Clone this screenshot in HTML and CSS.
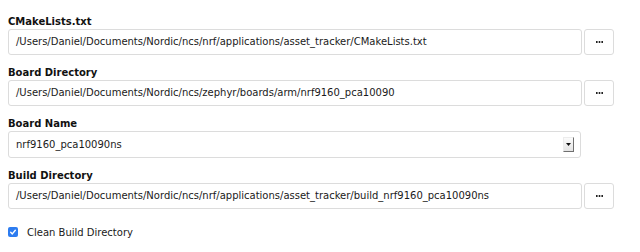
FILE: index.html
```html
<!DOCTYPE html>
<html>
<head>
<meta charset="utf-8">
<link rel="stylesheet" href="styles.css">
</head>
<body>
<div class="form">
  <div class="field">
    <div class="label">CMakeLists.txt</div>
    <div class="row">
      <div class="input">/Users/Daniel/Documents/Nordic/ncs/nrf/applications/asset_tracker/CMakeLists.txt</div>
      <div class="btn"><svg width="7" height="2" viewBox="0 0 7 2"><rect x="0" y="0" width="1.6" height="2" fill="#222"/><rect x="2.7" y="0" width="1.6" height="2" fill="#222"/><rect x="5.4" y="0" width="1.6" height="2" fill="#222"/></svg></div>
    </div>
  </div>
  <div class="field">
    <div class="label">Board Directory</div>
    <div class="row">
      <div class="input">/Users/Daniel/Documents/Nordic/ncs/zephyr/boards/arm/nrf9160_pca10090</div>
      <div class="btn"><svg width="7" height="2" viewBox="0 0 7 2"><rect x="0" y="0" width="1.6" height="2" fill="#222"/><rect x="2.7" y="0" width="1.6" height="2" fill="#222"/><rect x="5.4" y="0" width="1.6" height="2" fill="#222"/></svg></div>
    </div>
  </div>
  <div class="field">
    <div class="label">Board Name</div>
    <div class="row tall">
      <div class="input select">nrf9160_pca10090ns<span class="arrow"><svg width="5" height="3" viewBox="0 0 5 3"><path d="M0 0H5L2.5 3Z" fill="#111"/></svg></span></div>
      <div class="spacer"></div>
    </div>
  </div>
  <div class="field">
    <div class="label">Build Directory</div>
    <div class="row">
      <div class="input">/Users/Daniel/Documents/Nordic/ncs/nrf/applications/asset_tracker/build_nrf9160_pca10090ns</div>
      <div class="btn"><svg width="7" height="2" viewBox="0 0 7 2"><rect x="0" y="0" width="1.6" height="2" fill="#222"/><rect x="2.7" y="0" width="1.6" height="2" fill="#222"/><rect x="5.4" y="0" width="1.6" height="2" fill="#222"/></svg></div>
    </div>
  </div>
  <div class="check">
    <span class="box"><svg width="10" height="10" viewBox="0 0 10 10"><path d="M2.7 5.3L4.3 6.9L7.3 3.3" fill="none" stroke="#fff" stroke-width="1.4" stroke-linecap="round" stroke-linejoin="round"/></svg></span>
    <span class="check-label">Clean Build Directory</span>
  </div>
</div>
</body>
</html>
```

FILE: styles.css
```css
html, body {
  margin: 0;
  padding: 0;
  background: #fff;
}
body {
  font-family: "DejaVu Sans", Verdana, sans-serif;
  color: #1a1a1a;
  width: 640px;
  height: 252px;
  overflow: hidden;
}
.form {
  padding: 14px 0 0 8px;
  width: 606px;
}
.field {
  margin-bottom: 10px;
}
.label {
  font-size: 10px;
  font-weight: bold;
  line-height: 12px;
  height: 12px;
  padding-top: 2px;
  margin-bottom: 1px;
  color: #111;
}
.row {
  display: flex;
  gap: 2px;
  height: 26px;
}
.row.tall {
  height: 27px;
}
.input {
  flex: 1;
  box-sizing: border-box;
  height: 100%;
  border: 1px solid #dcdcdc;
  border-radius: 3px;
  padding: 0 0 0 7px;
  font-size: 10px;
  line-height: 24px;
  white-space: nowrap;
  overflow: hidden;
  color: #1a1a1a;
}
.select {
  display: flex;
  align-items: center;
  justify-content: space-between;
  padding-right: 6px;
}
.arrow {
  width: 11px;
  height: 15px;
  box-sizing: border-box;
  background: linear-gradient(#fbfbfb, #e4e4e4);
  border-right: 1px solid #6f6f6f;
  border-bottom: 1px solid #6f6f6f;
  border-top: 1px solid #ececec;
  border-left: 1px solid #ececec;
  display: flex;
  align-items: center;
  justify-content: center;
}
.spacer {
  width: 31px;
  flex: none;
}
.btn {
  width: 30px;
  flex: none;
  box-sizing: border-box;
  height: 26px;
  border: 1px solid #dcdcdc;
  border-radius: 3px;
  display: flex;
  align-items: center;
  justify-content: center;
}
.check {
  display: flex;
  align-items: center;
  margin-top: 18px;
  height: 10px;
}
.box {
  width: 10px;
  height: 10px;
  border-radius: 2px;
  background: #2d7cf0;
  display: flex;
  margin-right: 9px;
}
.check-label {
  font-size: 10px;
  color: #1a1a1a;
}
```
